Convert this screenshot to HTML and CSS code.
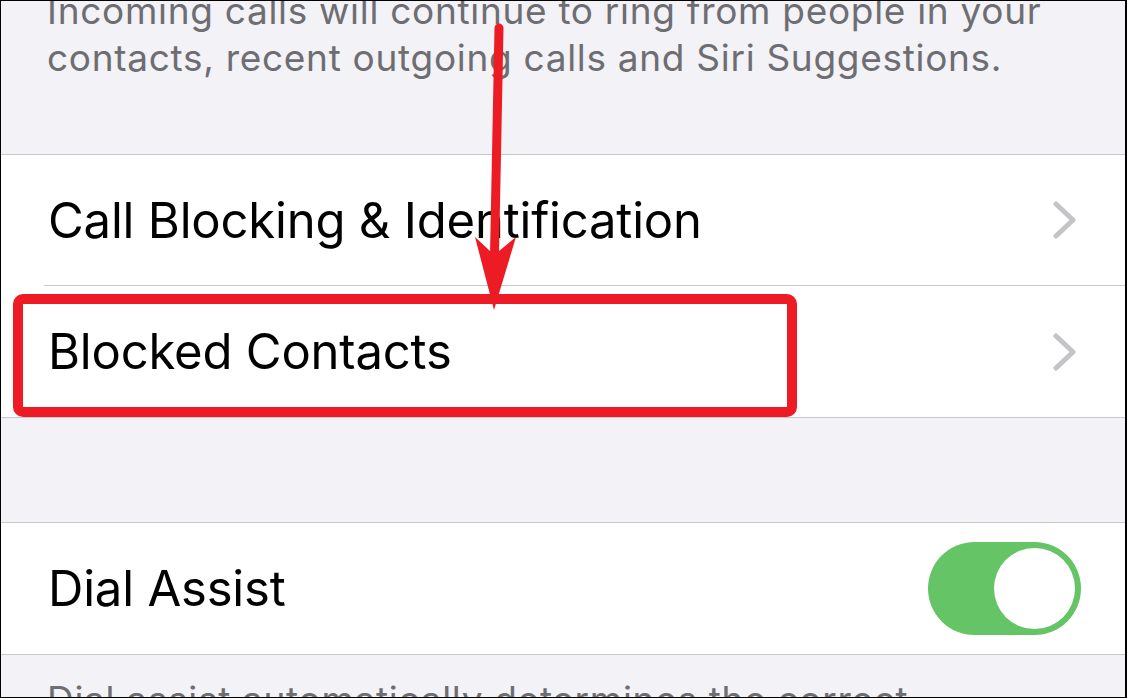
FILE: index.html
```html
<!DOCTYPE html>
<html lang="en">
<head>
    <meta charset="UTF-8">
    <meta name="viewport" content="width=device-width, initial-scale=1.0">
    <title>Phone Settings</title>
    <link rel="stylesheet" href="styles.css">
</head>
<body>
    <div class="screen">
        <section class="note note-top">
            <p>Incoming calls will continue to ring from people in your contacts, recent outgoing calls and Siri Suggestions.</p>
        </section>

        <div class="group">
            <div class="row">
                <span class="label">Call Blocking &amp; Identification</span>
                <svg class="chevron" viewBox="0 0 24 38" width="24" height="38">
                    <path d="M3 3 L20 19 L3 35" fill="none" stroke="#c4c4c7" stroke-width="5" stroke-linecap="round" stroke-linejoin="round"/>
                </svg>
            </div>
            <div class="row">
                <span class="label">Blocked Contacts</span>
                <svg class="chevron" viewBox="0 0 24 38" width="24" height="38">
                    <path d="M3 3 L20 19 L3 35" fill="none" stroke="#c4c4c7" stroke-width="5" stroke-linecap="round" stroke-linejoin="round"/>
                </svg>
            </div>
        </div>

        <div class="spacer"></div>

        <div class="group">
            <div class="row">
                <span class="label">Dial Assist</span>
                <div class="toggle on"><div class="knob"></div></div>
            </div>
        </div>

        <section class="note note-bottom">
            <p>Dial assist automatically determines the correct international or local prefix when dialling.</p>
        </section>

        <!-- annotation drawn over the screenshot -->
        <svg class="annotation" viewBox="0 0 1127 698" width="1127" height="698">
            <rect x="18" y="299" width="774" height="113" rx="5" fill="none" stroke="#ed1c24" stroke-width="10"/>
            <line x1="499" y1="28" x2="494" y2="280" stroke="#ed1c24" stroke-width="9" stroke-linecap="round"/>
            <polygon points="475,237 490,251 499,251 516,237 494,310" fill="#ed1c24"/>
        </svg>
    </div>
</body>
</html>
```

FILE: styles.css
```css
:root {
    --group-bg: #f2f2f7;
    --cell-bg: #ffffff;
    --separator: #c8c7cc;
    --note-text: #6d6d72;
    --switch-on: #65c466;
}
* {
    margin: 0;
    padding: 0;
    box-sizing: border-box;
}
body {
    font-family: Inter, "Noto Sans", sans-serif;
    background-color: var(--group-bg);
}
.screen {
    position: relative;
    width: 1127px;
    height: 698px;
    overflow: hidden;
    background-color: var(--group-bg);
    border: 1px solid #000;
    border-right-width: 2px;
}
.note {
    padding: 0 46px;
    color: var(--note-text);
    font-size: 37px;
    line-height: 47px;
    letter-spacing: 0.7px;
}
.note-top {
    display: flow-root;
    height: 153px;
}
.note-top p {
    margin-top: -14px;
}
.note-bottom {
    padding-top: 21px;
}
.group {
    background-color: var(--cell-bg);
    border-top: 1px solid var(--separator);
    border-bottom: 1px solid var(--separator);
}
.row {
    display: flex;
    align-items: center;
    justify-content: space-between;
    height: 131px;
    margin-left: 43px;
    padding-left: 4px;
    padding-right: 48px;
    border-bottom: 1px solid var(--separator);
}
.row:last-child {
    border-bottom: none;
}
.label {
    font-size: 49px;
    color: #000;
    letter-spacing: -0.2px;
}
.chevron {
    display: block;
}
.spacer {
    height: 104px;
}
.toggle {
    width: 153px;
    height: 93px;
    border-radius: 47px;
    background-color: #e9e9eb;
    padding: 6px;
    margin-right: -4px;
    display: flex;
}
.toggle.on {
    background-color: var(--switch-on);
    justify-content: flex-end;
}
.knob {
    width: 81px;
    height: 81px;
    border-radius: 50%;
    background-color: #fff;
}
.annotation {
    position: absolute;
    top: -1px;
    left: -1px;
    pointer-events: none;
}
```
